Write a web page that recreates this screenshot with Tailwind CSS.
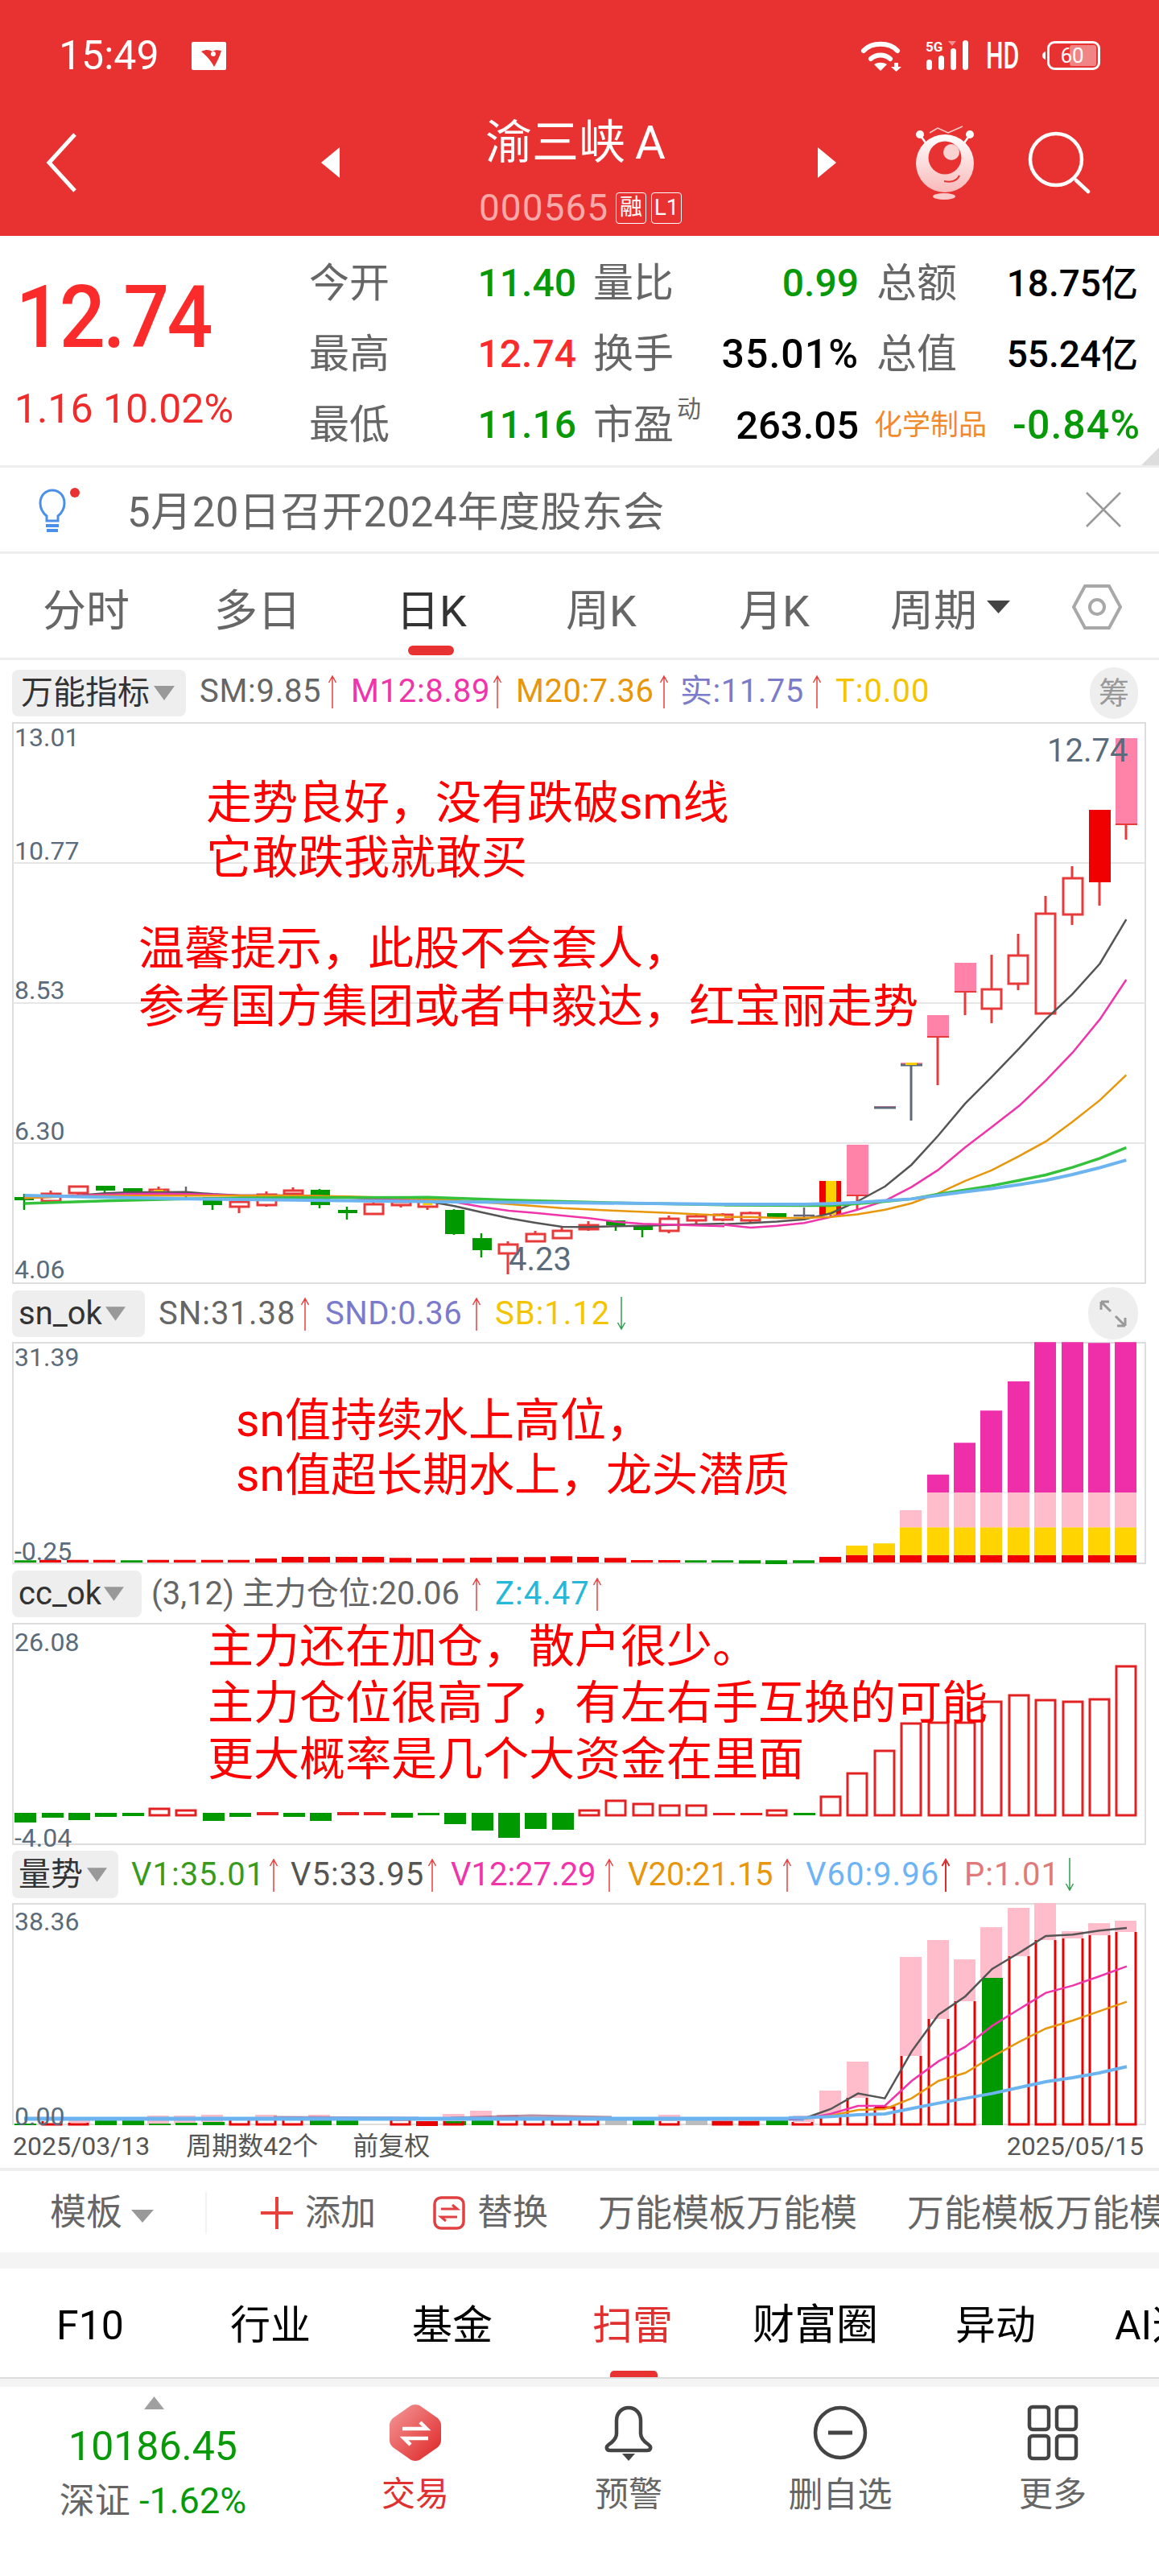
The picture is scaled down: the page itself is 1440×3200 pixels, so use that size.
<!doctype html>
<html lang="zh">
<head>
<meta charset="utf-8">
<script src="https://cdn.jsdelivr.net/npm/@tailwindcss/browser@4"></script>
</head>
<body class="bg-white font-['Roboto','Noto_Sans_CJK_SC',sans-serif]">
<div class="w-[1440px] h-[3200px] overflow-hidden relative bg-white">

<!-- header -->
<header class="h-[293px] bg-[#e83232] text-white relative">
  <div class="h-[132px] flex items-center pl-[73px] pr-[73px] pt-[6px]">
    <span class="text-[50px] leading-none">15:49</span>
    <svg class="ml-[40px] w-[43px] h-[35px]" viewBox="0 0 43 35"><path fill="#fff" d="M2 0h39a2 2 0 0 1 2 2v31a2 2 0 0 1-2 2H2a2 2 0 0 1-2-2V2a2 2 0 0 1 2-2z"/><path fill="#e83232" d="M12 12c6-3 10-2 14 0 3-2 6-2 11-1-2 7-5 13-9 20-4-8-10-14-16-19z"/><circle cx="27" cy="15" r="3" fill="#fff"/></svg>
    <div class="ml-auto flex items-center">
      <svg class="w-[52px] h-[40px]" viewBox="0 0 52 40"><g fill="none" stroke="#fff" stroke-width="6" stroke-linecap="round"><path d="M3 14C13 3 35 3 45 14"/><path d="M12 24c7-6 17-6 24 0"/></g><path fill="#fff" d="M16 31c5-3 11-3 16 0l-8 8zM41 29h5v5h4l-6.500 6-6.500-6h4z"/></svg>
      <svg class="ml-[28px] w-[54px] h-[38px]" viewBox="0 0 54 38"><text x="0" y="14" font-size="17" font-weight="700" fill="#fff">5G</text><path d="M28 1h10l-5 6z" fill="#fff" fill-opacity=".45"/><g fill="#fff"><rect x="1" y="24" width="7" height="13" rx="3.500"/><rect x="16" y="19" width="7" height="18" rx="3.500"/><rect x="31" y="10" width="7" height="27" rx="3.500"/><rect x="46" y="0" width="7" height="37" rx="3.500"/></g></svg>
      <span class="ml-[21px] w-[42px] text-[46px] leading-none font-medium scale-x-[.66] origin-left whitespace-nowrap">HD</span>
      <svg class="ml-[28px] w-[4px] h-[10px]" viewBox="0 0 4 10"><path d="M4 0v10C1 9 0 7 0 5s1-4 4-5z" fill="#fff"/></svg>
      <div class="ml-[2px] w-[66px] h-[36px] rounded-[9px] border-[3px] border-white flex items-center justify-center relative">
        <div class="absolute right-[2px] top-[2px] bottom-[2px] w-[33px] rounded-[3px] bg-white/40"></div>
        <span class="relative text-[26px] leading-none -ml-[4px]">60</span>
      </div>
    </div>
  </div>
  <!-- nav -->
  <svg class="absolute left-[55px] top-[163px] w-[44px] h-[78px]" viewBox="0 0 44 78"><path d="M38 4 6 39l32 35" fill="none" stroke="#fff" stroke-width="5"/></svg>
  <svg class="absolute left-[399px] top-[183px] w-[24px] h-[38px]" viewBox="0 0 24 38"><path d="M23 0v38L0 19z" fill="#fff"/></svg>
  <svg class="absolute left-[1015px] top-[183px] w-[24px] h-[38px]" viewBox="0 0 24 38"><path d="M1 0v38l23-19z" fill="#fff"/></svg>
  <div class="absolute left-[603px] top-[143px] flex items-center h-[68px] text-[58px] leading-none">渝三峡<span class="ml-[12px]">A</span></div>
  <div class="absolute left-[595px] top-[238px] flex items-center h-[40px]">
    <span class="text-[46px] leading-none text-[#f7a9a9] tracking-[1px]">000565</span>
    <span class="ml-[9px] w-[38px] h-[39px] border-[1.5px] border-white rounded-[4px] text-[28px] leading-none flex items-center justify-center">融</span>
    <span class="ml-[6px] w-[38px] h-[39px] border-[1.5px] border-white rounded-[4px] text-[28px] leading-none flex items-center justify-center">L1</span>
  </div>
  <svg class="absolute left-[1137px] top-[156px] w-[76px] h-[94px]" viewBox="0 0 76 94">
    <defs><linearGradient id="mg" x1="0" y1="0" x2="0" y2="1"><stop offset="0" stop-color="#ffffff"/><stop offset="1" stop-color="#f9b9b9"/></linearGradient></defs>
    <path d="M18 9l10-6 13 6 18-8" fill="none" stroke="#fbd0d0" stroke-width="1.500"/>
    <circle cx="6" cy="11" r="5" fill="#fff"/><circle cx="68" cy="11" r="5" fill="#fff"/>
    <path d="M7 13l8 11M67 13l-8 11" stroke="#fff" stroke-width="2.500"/>
    <circle cx="37" cy="47" r="36" fill="url(#mg)"/>
    <circle cx="37" cy="40" r="20.500" fill="#e83232"/><circle cx="45" cy="33" r="10" fill="#fbd2d2"/>
    <path d="M36 69c8 2 16 0 19-7" fill="none" stroke="#e83232" stroke-width="2"/>
    <ellipse cx="36" cy="88" rx="14" ry="4" fill="#f9caca"/>
  </svg>
  <svg class="absolute left-[1277px] top-[163px] w-[78px] h-[78px]" viewBox="0 0 78 78"><circle cx="35" cy="35" r="32" fill="none" stroke="#fff" stroke-width="4.500"/><path d="M60 61l15 14" stroke="#fff" stroke-width="4.500" stroke-linecap="round"/></svg>
</header>

<!-- quote -->
<section class="h-[288px] border-b-[3px] border-[#eeeeee] flex relative">
  <div class="w-[386px] shrink-0">
    <div class="pl-[21px] pt-[51px] text-[108px] leading-[100px] font-medium text-[#fb2b2b] tracking-[-3px] scale-x-[.93] origin-left">12.74</div>
    <div class="pl-[18px] pt-[37px] text-[50px] leading-[54px] text-[#ef2b2b] whitespace-nowrap">1.16 10.02%</div>
  </div>
  <div class="pt-[15px] -ml-[2px]">
    <div class="h-[88px] flex items-center">
      <span class="w-[100px] text-[50px] leading-none text-[#666]">今开</span>
      <span class="w-[232px] text-right text-[48px] font-medium text-[#089908] leading-none">11.40</span>
      <span class="ml-[21px] w-[100px] text-[50px] leading-none text-[#666]">量比</span>
      <span class="w-[230px] text-right text-[48px] font-medium text-[#089908] leading-none">0.99</span>
      <span class="ml-[22px] w-[100px] text-[50px] leading-none text-[#666]">总额</span>
      <span class="w-[225px] text-right text-[46px] text-black font-medium leading-none whitespace-nowrap">18.75亿</span>
    </div>
    <div class="h-[88px] flex items-center">
      <span class="w-[100px] text-[50px] leading-none text-[#666]">最高</span>
      <span class="w-[232px] text-right text-[48px] font-medium text-[#fb2b2b] leading-none">12.74</span>
      <span class="ml-[21px] w-[100px] text-[50px] leading-none text-[#666]">换手</span>
      <span class="w-[230px] text-right text-[50px] font-medium text-black leading-none tracking-[1px]">35.01%</span>
      <span class="ml-[22px] w-[100px] text-[50px] leading-none text-[#666]">总值</span>
      <span class="w-[225px] text-right text-[46px] text-black font-medium leading-none whitespace-nowrap">55.24亿</span>
    </div>
    <div class="h-[88px] flex items-center">
      <span class="w-[100px] text-[50px] leading-none text-[#666]">最低</span>
      <span class="w-[232px] text-right text-[48px] font-medium text-[#089908] leading-none">11.16</span>
      <span class="ml-[21px] w-[100px] text-[50px] leading-none text-[#666] relative">市盈<span class="absolute left-[104px] top-[-10px] text-[30px] leading-none">动</span></span>
      <span class="w-[230px] text-right text-[49px] font-medium text-black leading-none">263.05</span>
      <span class="ml-[19px] w-[142px] text-[35px] leading-none text-[#f08a2b] whitespace-nowrap">化学制品</span>
      <span class="ml-[30px] w-[159px] text-right text-[50px] font-medium text-[#089908] leading-none whitespace-nowrap tracking-[1px]">-0.84%</span>
    </div>
  </div>
  <svg class="absolute right-0 bottom-0 w-[22px] h-[22px]" viewBox="0 0 22 22"><path d="M22 0v22H0z" fill="#dddddd"/></svg>
</section>

<!-- notice -->
<section class="h-[107px] border-b-[3px] border-[#eeeeee] flex items-center pl-[44px] pr-[46px]">
  <svg class="w-[58px] h-[58px] shrink-0 mt-[2px]" viewBox="0 0 58 58"><path d="M14 36c-5-4-8-10-8-16C6 10 13 4 21 4s15 6 15 16c0 6-3 12-8 16v6H14z" fill="none" stroke="#4a90ea" stroke-width="3"/><path d="M13 48h16M14 54h14" stroke="#4a90ea" stroke-width="4"/><circle cx="49" cy="7" r="6" fill="#e83232"/></svg>
  <span class="ml-[56px] mt-[6px] text-[51px] leading-none text-[#666] whitespace-nowrap tracking-[.5px]">5月20日召开2024年度股东会</span>
  <svg class="ml-auto w-[46px] h-[46px]" viewBox="0 0 46 46"><path d="M2 2l42 42M44 2 2 44" stroke="#999" stroke-width="2.500"/></svg>
</section>

<!-- period tabs -->
<nav class="h-[132px] border-b-[3px] border-[#eeeeee] relative text-[#666] text-[54px] leading-none">
  <span class="absolute left-[53px] top-[45px]">分时</span>
  <span class="absolute left-[266px] top-[45px]">多日</span>
  <span class="absolute left-[492px] top-[45px] text-[#333]">日K</span>
  <span class="absolute left-[703px] top-[45px]">周K</span>
  <span class="absolute left-[918px] top-[45px]">月K</span>
  <span class="absolute left-[1106px] top-[45px]">周期</span>
  <svg class="absolute left-[1226px] top-[58px] w-[29px] h-[16px]" viewBox="0 0 29 16"><path d="M0 0h29L14.500 16z" fill="#444"/></svg>
  <svg class="absolute left-[1332px] top-[38px] w-[62px] h-[56px]" viewBox="0 0 62 56"><path d="M16 2h30l14 26-14 26H16L2 28z" fill="none" stroke="#a8a8a8" stroke-width="4"/><circle cx="31" cy="28" r="9" fill="none" stroke="#a8a8a8" stroke-width="4"/></svg>
  <span class="absolute left-[507px] top-[114px] w-[57px] h-[12px] rounded-[6px] bg-[#e83232]"></span>
</nav>

<!-- row 1 -->
<div class="h-[78px] relative flex items-center pl-[248px]">
  <div class="absolute left-[15px] top-[12px] w-[216px] h-[58px] rounded-[8px] bg-[#eeeeee] flex items-center pl-[11px]"><span class="text-[40px] leading-none text-[#333] whitespace-nowrap">万能指标</span><svg class="ml-[5px] w-[26px] h-[18px]" viewBox="0 0 26 18"><path d="M0 0h26L13 18z" fill="#999"/></svg></div>
  <div class="flex w-[188px] shrink-0 items-center"><span class="w-[153px] text-[40px] leading-none text-[#666] whitespace-nowrap tracking-[.7px]">SM:9.85</span><svg class="ml-[6px] w-[12px] h-[42px]" viewBox="0 0 12 42"><path d="M6 42V2M1.500 10 6 2l4.500 8" fill="none" stroke="#e84040" stroke-width="1.500"/></svg></div>
  <div class="flex w-[205px] shrink-0 items-center"><span class="w-[170px] text-[40px] leading-none text-[#f034aa] whitespace-nowrap tracking-[.7px]">M12:8.89</span><svg class="ml-[6px] w-[12px] h-[42px]" viewBox="0 0 12 42"><path d="M6 42V2M1.500 10 6 2l4.500 8" fill="none" stroke="#e84040" stroke-width="1.500"/></svg></div>
  <div class="flex w-[204px] shrink-0 items-center"><span class="w-[172px] text-[40px] leading-none text-[#e8960c] whitespace-nowrap tracking-[.5px]">M20:7.36</span><svg class="ml-[6px] w-[12px] h-[42px]" viewBox="0 0 12 42"><path d="M6 42V2M1.500 10 6 2l4.500 8" fill="none" stroke="#e84040" stroke-width="1.500"/></svg></div>
  <div class="flex w-[193px] shrink-0 items-center"><span class="w-[158px] text-[40px] leading-none text-[#7b7bcb] whitespace-nowrap tracking-[.5px]">实:11.75</span><svg class="ml-[6px] w-[12px] h-[42px]" viewBox="0 0 12 42"><path d="M6 42V2M1.500 10 6 2l4.500 8" fill="none" stroke="#e84040" stroke-width="1.500"/></svg></div>
  <span class="text-[40px] leading-none text-[#f5c400] whitespace-nowrap tracking-[1px]">T:0.00</span>
  <div class="absolute left-[1354px] top-[9px] w-[60px] h-[64px] rounded-full bg-[#eeeeee] flex items-center justify-center text-[38px] leading-none text-[#999]">筹</div>
</div>

<!-- K chart -->
<div class="relative h-[697px]">
<svg class="block w-[1440px] h-[697px] overflow-visible" viewBox="0 898 1440 697">
  <rect x="16" y="898" width="1407" height="696" fill="none" stroke="#dddddd" stroke-width="2"/>
  <path d="M16 1072H1423M16 1246H1423M16 1420H1423" stroke="#e6e6e6" stroke-width="2"/>
  <!-- green -->
  <g stroke="#009900" stroke-width="2.500">
    <path d="M30 1483V1503M130 1479V1483M264 1497V1503M397 1477V1501M431 1499V1515M564 1502V1534M598 1532V1562M765 1522V1529M798 1528V1537"/>
  </g>
  <g fill="#009900">
    <rect x="18" y="1487" width="24" height="4"/><rect x="119" y="1473" width="24" height="6"/><rect x="153" y="1476" width="24" height="5"/><rect x="252" y="1487" width="24" height="10"/><rect x="386" y="1478" width="24" height="19"/><rect x="420" y="1503" width="24" height="4"/><rect x="553" y="1503" width="24" height="30"/><rect x="587" y="1538" width="24" height="15"/><rect x="753" y="1516" width="24" height="6"/><rect x="787" y="1522" width="24" height="6"/><rect x="953" y="1507" width="24" height="6"/>
  </g>
  <!-- gray doji -->
  <path d="M231 1474V1490M219 1483H243M999 1500V1516M986 1510H1012" stroke="#667" stroke-width="2.500"/>
  <!-- hollow -->
  <g stroke="#e83a3a" stroke-width="3" fill="#fff">
    <path d="M63 1479V1494M97 1473V1485M197 1474V1485M297 1492V1507M331 1480V1499M364 1475V1491M464 1493V1509M498 1490V1500M531 1487V1503M631 1542V1583M665 1529V1543M698 1525V1539M731 1517V1529M831 1510V1532M865 1508V1520M898 1507V1517M932 1505V1518" fill="none"/>
    <rect x="52" y="1483" width="23" height="9"/><rect x="86" y="1474" width="23" height="8"/><rect x="186" y="1478" width="23" height="5"/><rect x="286" y="1493" width="23" height="6"/><rect x="320" y="1484" width="23" height="13"/><rect x="353" y="1479" width="23" height="4"/><rect x="453" y="1496" width="23" height="12"/><rect x="487" y="1493" width="23" height="4"/><rect x="520" y="1488" width="23" height="11"/><rect x="620" y="1546" width="23" height="11"/><rect x="654" y="1533" width="23" height="9"/><rect x="687" y="1529" width="23" height="9"/><rect x="720" y="1522" width="23" height="5" fill="#d05050"/><rect x="820" y="1514" width="23" height="15"/><rect x="854" y="1511" width="23" height="5"/><rect x="887" y="1509" width="23" height="6"/><rect x="921" y="1507" width="23" height="9"/>
  </g>
  <g stroke="#e83a3a" stroke-width="3" fill="#fff">
    <path d="M1299 1113V1135M1332 1076V1091M1332 1136V1149M1265 1160V1187M1265 1222V1230M1232 1186V1229M1232 1253V1271" fill="none"/>
    <rect x="1220" y="1229" width="24" height="24"/><rect x="1253" y="1187" width="24" height="35"/><rect x="1287" y="1135" width="24" height="124"/><rect x="1321" y="1091" width="24" height="45"/>
  </g>
  <rect x="191" y="1478" width="12" height="5" fill="#ffd000"/><rect x="525" y="1488" width="12" height="9" fill="#ffd000"/>
  <!-- right pink/red -->
  <path d="M1399 1024V1043M1366 1096V1125M1199 1232V1261M1165 1288V1348M1065 1485V1503" stroke="#e83a3a" stroke-width="3" fill="none"/>
  <g fill="#ff82a8">
    <rect x="1386" y="917" width="27" height="107"/><rect x="1186" y="1196" width="27" height="36"/><rect x="1152" y="1261" width="27" height="27"/><rect x="1052" y="1422" width="27" height="63"/>
    <rect x="1086" y="1374" width="27" height="2"/><rect x="1119" y="1320" width="27" height="3"/>
  </g>
  <path d="M1386 1024H1413M1186 1232H1213M1152 1288H1179M1052 1485H1079" stroke="#e83a3a" stroke-width="2"/>
  <rect x="1353" y="1006" width="27" height="90" fill="#f00000"/>
  <rect x="1018" y="1467" width="27" height="42" fill="#f00000"/><rect x="1026" y="1467" width="13" height="42" fill="#ffd000"/><path d="M1032 1509V1513" stroke="#e83a3a" stroke-width="3"/>
  <path d="M1086 1376H1113M1119 1323H1146M1132 1323V1392" stroke="#5c6b78" stroke-width="3" fill="none"/>
  <rect x="1125" y="1320" width="14" height="3" fill="#ffd000"/>
  <!-- MAs left -->
  <g transform="translate(0 1380) scale(.574 .3333)" fill="none">
    <polyline vector-effect="non-scaling-stroke" stroke="#555" stroke-width="2.500" points="53,322 113,320 170,315 228,307 287,303 345,303 403,302 461,310 520,315 578,315 636,315 694,318 752,322 810,328 868,333 926,337 984,355 1043,378 1101,400 1159,417 1217,432 1275,433 1333,430 1391,428 1449,425 1507,423 1568,420"/>
    <polyline vector-effect="non-scaling-stroke" stroke="#f034aa" stroke-width="2.500" points="53,325 113,320 170,315 228,312 287,310 345,308 403,310 461,312 520,315 578,315 636,316 694,318 752,323 810,328 868,330 926,332 984,340 1043,358 1101,372 1159,380 1217,390 1275,400 1333,413 1391,421 1449,424 1507,427 1568,430"/>
    <polyline vector-effect="non-scaling-stroke" stroke="#e8960c" stroke-width="2.500" points="53,325 170,318 287,316 403,316 520,316 636,316 752,319 868,325 984,333 1101,347 1217,362 1333,372 1449,380 1568,390"/>
    <polyline vector-effect="non-scaling-stroke" stroke="#34c13c" stroke-width="3.500" points="53,345 228,335 403,328 520,325 694,323 926,322 1101,332 1333,343 1568,350"/>
    <polyline vector-effect="non-scaling-stroke" stroke="#6cb4f0" stroke-width="4" points="53,315 228,322 403,328 636,332 926,338 1217,342 1568,348"/>
  </g>
  <g transform="translate(900 880) scale(.34435 .44643)" fill="none">
    <polyline vector-effect="non-scaling-stroke" stroke="#555" stroke-width="2.500" points="1450,587 1355,710 1256,795 1160,865 1065,945 965,1025 868,1100 770,1190 675,1270 580,1330 480,1372 384,1405 288,1422 190,1428 95,1432 0,1435"/>
    <polyline vector-effect="non-scaling-stroke" stroke="#f034aa" stroke-width="2.500" points="1450,755 1355,865 1256,958 1160,1035 1065,1105 965,1165 868,1222 770,1285 675,1332 580,1370 480,1395 384,1415 288,1432 190,1440 95,1445 0,1437"/>
    <polyline vector-effect="non-scaling-stroke" stroke="#e8960c" stroke-width="2.500" points="1450,1020 1355,1090 1256,1150 1160,1205 1065,1245 965,1285 868,1315 770,1350 675,1377 580,1395 480,1408 384,1415 288,1418 190,1418 95,1415 0,1415"/>
    <polyline vector-effect="non-scaling-stroke" stroke="#34c13c" stroke-width="3.500" points="1450,1222 1355,1252 1256,1277 1160,1298 1065,1313 965,1328 868,1340 770,1352 675,1365 580,1372 480,1378 384,1383 288,1383 0,1382"/>
    <polyline vector-effect="non-scaling-stroke" stroke="#6cb4f0" stroke-width="4" points="1450,1257 1355,1278 1256,1297 1160,1313 1065,1325 965,1336 868,1345 770,1355 675,1365 580,1370 480,1375 384,1378 288,1380 0,1380"/>
  </g>
</svg>
<span class="absolute left-[18px] top-[-1px] text-[32px] leading-[38px] text-[#5a6b7b]">13.01</span>
<span class="absolute left-[18px] top-[140px] text-[32px] leading-[38px] text-[#5a6b7b]">10.77</span>
<span class="absolute left-[18px] top-[313px] text-[32px] leading-[38px] text-[#5a6b7b]">8.53</span>
<span class="absolute left-[18px] top-[488px] text-[32px] leading-[38px] text-[#5a6b7b]">6.30</span>
<span class="absolute left-[18px] top-[660px] text-[32px] leading-[38px] text-[#5a6b7b]">4.06</span>
<span class="absolute left-[1301px] top-[12px] text-[40px] leading-[46px] text-[#5a6b7b]">12.74</span>
<span class="absolute left-[632px] top-[644px] text-[40px] leading-[46px] text-[#5a6b7b]">4.23</span>
<p class="absolute left-[256px] top-[66px] text-[57px] leading-[68px] text-[#f00] whitespace-nowrap">走势良好，没有跌破sm线<br>它敢跌我就敢买</p>
<p class="absolute left-[172px] top-[245px] text-[57px] leading-[72px] text-[#f00] whitespace-nowrap">温馨提示，此股不会套人，<br>参考国方集团或者中毅达，红宝丽走势</p>
</div>

<!-- row 2 -->
<div class="h-[73px] relative flex items-center pl-[197px]">
  <div class="absolute left-[15px] top-[8px] w-[165px] h-[58px] rounded-[8px] bg-[#eeeeee] flex items-center pl-[8px]"><span class="text-[40px] leading-none text-[#333] whitespace-nowrap">sn_ok</span><svg class="ml-[4px] w-[25px] h-[18px]" viewBox="0 0 26 18"><path d="M0 0h26L13 18z" fill="#999"/></svg></div>
  <div class="flex w-[207px] shrink-0 items-center"><span class="w-[170px] text-[40px] leading-none text-[#666] whitespace-nowrap tracking-[1px]">SN:31.38</span><svg class="ml-[6px] w-[12px] h-[42px]" viewBox="0 0 12 42"><path d="M6 42V2M1.500 10 6 2l4.500 8" fill="none" stroke="#e84040" stroke-width="1.500"/></svg></div>
  <div class="flex w-[211px] shrink-0 items-center"><span class="w-[176px] text-[40px] leading-none text-[#7b7bcb] whitespace-nowrap tracking-[.5px]">SND:0.36</span><svg class="ml-[6px] w-[12px] h-[42px]" viewBox="0 0 12 42"><path d="M6 42V2M1.500 10 6 2l4.500 8" fill="none" stroke="#e84040" stroke-width="1.500"/></svg></div>
  <div class="flex shrink-0 items-center"><span class="w-[145px] text-[40px] leading-none text-[#f5c400] whitespace-nowrap tracking-[1px]">SB:1.12</span><svg class="ml-[6px] w-[12px] h-[42px]" viewBox="0 0 12 42"><path d="M6 0v40M1.500 32 6 40l4.500-8" fill="none" stroke="#2f9e4f" stroke-width="1.500"/></svg></div>
  <div class="absolute left-[1352px] top-[4px] w-[62px] h-[65px] rounded-full bg-[#eeeeee] flex items-center justify-center"><svg class="w-[34px] h-[34px]" viewBox="0 0 34 34"><path d="M2 2l12 12M2 2v10M2 2h10M32 32 20 20M32 32V22M32 32H22" fill="none" stroke="#999" stroke-width="3"/></svg></div>
</div>

<!-- sn chart -->
<div class="relative h-[275px]">
<svg class="block w-[1440px] h-[275px] overflow-visible" viewBox="0 1668 1440 275">
  <rect x="16" y="1668" width="1407" height="274" fill="none" stroke="#dddddd" stroke-width="2"/>
  <g transform="translate(0 1580) scale(1 .3333)">
    <g fill="#009900"><path d="M18 1075h27v8H18zM150 1075h27v8h-27zM851 1075h27v8h-27zM884 1075h27v8h-27zM918 1075h27v12h-27zM951 1075h27v14h-27zM985 1075h27v10h-27z"/></g>
    <g fill="#f00000"><path d="M49 1073h27v10H49zM83 1073h27v10H83zM116 1073h27v10h-27zM183 1073h27v10h-27zM216 1073h27v10h-27zM250 1073h27v10h-27zM283 1073h27v10h-27zM317 1068h27v15h-27zM350 1062h27v21h-27zM383 1062h27v21h-27zM417 1062h27v21h-27zM450 1062h27v21h-27zM484 1066h27v17h-27zM517 1068h27v15h-27zM550 1067h27v16h-27zM584 1065h27v18h-27zM617 1063h27v20h-27zM651 1063h27v20h-27zM684 1060h27v23h-27zM717 1062h27v21h-27zM751 1066h27v17h-27zM784 1074h27v9h-27zM818 1074h27v9h-27zM1018 1062h27v21h-27zM1051 1055h27v28h-27zM1085 1055h27v28h-27zM1118 1055h27v28h-27zM1152 1055h27v28h-27zM1185 1055h27v28h-27zM1218 1055h27v28h-27zM1252 1055h27v28h-27zM1285 1055h27v28h-27zM1319 1055h27v28h-27zM1352 1055h27v28h-27zM1385 1055h27v28h-27z"/></g>
    <g fill="#ffd400"><path d="M1051 1020h27v35h-27zM1085 1012h27v43h-27zM1118 952h27v103h-27zM1152 952h27v103h-27zM1185 952h27v103h-27zM1218 952h27v103h-27zM1252 952h27v103h-27zM1285 952h27v103h-27zM1319 952h27v103h-27zM1352 952h27v103h-27zM1385 952h27v103h-27z"/></g>
    <g fill="#ffbccb"><path d="M1118 888h27v64h-27zM1152 822h27v130h-27zM1185 822h27v130h-27zM1218 822h27v130h-27zM1252 822h27v130h-27zM1285 822h27v130h-27zM1319 822h27v130h-27zM1352 822h27v130h-27zM1385 822h27v130h-27z"/></g>
    <g fill="#ee2fa9"><path d="M1152 755h27v67h-27zM1185 637h27v185h-27zM1218 517h27v305h-27zM1252 408h27v414h-27zM1285 262h27v560h-27zM1319 262h27v560h-27zM1352 265h27v557h-27zM1385 262h27v560h-27z"/></g>
  </g>
</svg>
<span class="absolute left-[18px] top-[-1px] text-[32px] leading-[38px] text-[#5a6b7b]">31.39</span>
<span class="absolute left-[18px] top-[240px] text-[32px] leading-[38px] text-[#5a6b7b]">-0.25</span>
<p class="absolute left-[293px] top-[63px] text-[57px] leading-[68px] text-[#f00] whitespace-nowrap">sn值持续水上高位，<br>sn值超长期水上，龙头潜质</p>
</div>

<!-- row 3 -->
<div class="h-[74px] relative flex items-center pl-[188px]">
  <div class="absolute left-[15px] top-[8px] w-[161px] h-[58px] rounded-[8px] bg-[#eeeeee] flex items-center pl-[8px]"><span class="text-[40px] leading-none text-[#333] whitespace-nowrap">cc_ok</span><svg class="ml-[3px] w-[25px] h-[18px]" viewBox="0 0 26 18"><path d="M0 0h26L13 18z" fill="#999"/></svg></div>
  <div class="flex w-[427px] shrink-0 items-center"><span class="w-[395px] text-[40px] leading-none text-[#666] whitespace-nowrap">(3,12) 主力仓位:20.06</span><svg class="ml-[3px] w-[12px] h-[42px]" viewBox="0 0 12 42"><path d="M6 42V2M1.500 10 6 2l4.500 8" fill="none" stroke="#e84040" stroke-width="1.500"/></svg></div>
  <div class="flex shrink-0 items-center"><span class="w-[118px] text-[40px] leading-none text-[#25b8d8] whitespace-nowrap tracking-[1px]">Z:4.47</span><svg class="ml-[3px] w-[12px] h-[42px]" viewBox="0 0 12 42"><path d="M6 42V2M1.500 10 6 2l4.500 8" fill="none" stroke="#e84040" stroke-width="1.500"/></svg></div>
</div>

<!-- cc chart -->
<div class="relative h-[275px]">
<svg class="block w-[1440px] h-[275px] overflow-visible" viewBox="0 2017 1440 275">
  <rect x="16" y="2017" width="1407" height="274" fill="none" stroke="#dddddd" stroke-width="2"/>
  <g fill="#009900"><path d="M18 2252h27v12H18zM52 2252h27v6H52zM85 2252h27v9H85zM118 2252h27v5h-27zM152 2252h27v4h-27zM252 2252h27v10h-27zM285 2252h27v5h-27zM352 2252h27v5h-27zM385 2252h27v10h-27zM486 2252h27v6h-27zM519 2252h27v3h-27zM552 2252h27v14h-27zM586 2252h27v22h-27zM619 2252h27v31h-27zM652 2252h27v20h-27zM686 2252h27v21h-27zM986 2252h27v3h-27z"/></g>
  <g fill="#e82020"><path d="M319 2251h27v4h-27zM419 2251h27v4h-27zM452 2251h27v4h-27zM886 2252h27v3h-27zM920 2252h27v3h-27z"/></g>
  <g fill="none" stroke="#e22222" stroke-width="3">
    <rect x="186" y="2247" width="24" height="8"/><rect x="219" y="2249" width="24" height="6"/><rect x="720" y="2249" width="24" height="6"/><rect x="753" y="2237" width="24" height="18"/><rect x="787" y="2241" width="24" height="14"/><rect x="820" y="2243" width="24" height="12"/><rect x="853" y="2243" width="24" height="12"/><rect x="953" y="2249" width="24" height="6"/><rect x="1020" y="2232" width="24" height="23"/><rect x="1053" y="2203" width="24" height="52"/><rect x="1087" y="2175" width="24" height="80"/><rect x="1120" y="2141" width="24" height="114"/><rect x="1154" y="2140" width="24" height="115"/><rect x="1187" y="2140" width="24" height="115"/><rect x="1220" y="2114" width="24" height="141"/><rect x="1254" y="2106" width="24" height="149"/><rect x="1287" y="2112" width="24" height="143"/><rect x="1321" y="2114" width="24" height="141"/><rect x="1354" y="2111" width="24" height="144"/><rect x="1387" y="2070" width="24" height="185"/>
  </g>
</svg>
<span class="absolute left-[18px] top-[4px] text-[32px] leading-[38px] text-[#5a6b7b]">26.08</span>
<span class="absolute left-[18px] top-[247px] text-[32px] leading-[38px] text-[#5a6b7b]">-4.04</span>
<p class="absolute left-[258px] top-[-6px] text-[57px] leading-[70px] text-[#f00] whitespace-nowrap">主力还在加仓，散户很少。<br>主力仓位很高了，有左右手互换的可能<br>更大概率是几个大资金在里面</p>
</div>

<!-- row 4 -->
<div class="h-[73px] relative flex items-center pl-[163px]">
  <div class="absolute left-[15px] top-[7px] w-[132px] h-[59px] rounded-[8px] bg-[#eeeeee] flex items-center pl-[8px]"><span class="text-[40px] leading-none text-[#333] whitespace-nowrap">量势</span><svg class="ml-[5px] w-[25px] h-[18px]" viewBox="0 0 26 18"><path d="M0 0h26L13 18z" fill="#999"/></svg></div>
  <div class="flex w-[198px] shrink-0 items-center"><span class="w-[163px] text-[40px] leading-none text-[#3a9a1e] whitespace-nowrap tracking-[1px]">V1:35.01</span><svg class="ml-[8px] w-[12px] h-[42px]" viewBox="0 0 12 42"><path d="M6 42V2M1.500 10 6 2l4.500 8" fill="none" stroke="#e84040" stroke-width="1.500"/></svg></div>
  <div class="flex w-[199px] shrink-0 items-center"><span class="w-[165px] text-[40px] leading-none text-[#555] whitespace-nowrap tracking-[1px]">V5:33.95</span><svg class="ml-[5px] w-[12px] h-[42px]" viewBox="0 0 12 42"><path d="M6 42V2M1.500 10 6 2l4.500 8" fill="none" stroke="#e84040" stroke-width="1.500"/></svg></div>
  <div class="flex w-[220px] shrink-0 items-center"><span class="w-[184px] text-[40px] leading-none text-[#f034aa] whitespace-nowrap">V12:27.29</span><svg class="ml-[7px] w-[12px] h-[42px]" viewBox="0 0 12 42"><path d="M6 42V2M1.500 10 6 2l4.500 8" fill="none" stroke="#e84040" stroke-width="1.500"/></svg></div>
  <div class="flex w-[221px] shrink-0 items-center"><span class="w-[184px] text-[40px] leading-none text-[#e8960c] whitespace-nowrap">V20:21.15</span><svg class="ml-[8px] w-[12px] h-[42px]" viewBox="0 0 12 42"><path d="M6 42V2M1.500 10 6 2l4.500 8" fill="none" stroke="#e84040" stroke-width="1.500"/></svg></div>
  <div class="flex w-[197px] shrink-0 items-center"><span class="w-[161px] text-[40px] leading-none text-[#6cb4f5] whitespace-nowrap tracking-[1px]">V60:9.96</span><svg class="ml-[7px] w-[12px] h-[42px]" viewBox="0 0 12 42"><path d="M6 42V2M1.500 10 6 2l4.500 8" fill="none" stroke="#d83030" stroke-width="2"/></svg></div>
  <div class="flex shrink-0 items-center"><span class="w-[117px] text-[40px] leading-none text-[#e07a7a] whitespace-nowrap tracking-[1px]">P:1.01</span><svg class="ml-[8px] w-[12px] h-[42px]" viewBox="0 0 12 42"><path d="M6 0v40M1.500 32 6 40l4.500-8" fill="none" stroke="#2f9e4f" stroke-width="1.500"/></svg></div>
</div>

<!-- vol chart -->
<div class="relative h-[275px]">
<svg class="block w-[1440px] h-[275px] overflow-visible" viewBox="0 2365 1440 275">
  <rect x="16" y="2365" width="1407" height="274" fill="none" stroke="#dddddd" stroke-width="2"/>
  <!-- pink caps -->
  <g fill="#ffbccb"><path d="M85 2633h27v4H85zM183 2628h27v10h-27zM216 2628h27v10h-27zM250 2627h27v9h-27zM317 2627h27v6h-27zM350 2629h27v4h-27zM383 2627h27v6h-27zM517 2630h27v3h-27zM550 2626h27v9h-27zM584 2622h27v11h-27zM617 2627h27v6h-27zM818 2627h27v8h-27zM985 2628h27v8h-27zM1018 2597h27v30h-27zM1052 2561h27v45h-27zM1118 2431h27v123h-27zM1152 2410h27v98h-27zM1185 2434h27v52h-27zM1218 2394h27v63h-27zM1252 2370h27v60h-27zM1285 2364h27v46h-27zM1319 2399h27v9h-27zM1352 2389h27v15h-27zM1385 2386h27v14h-27z"/></g>
  <g fill="#009900"><path d="M18 2638h27v2H18zM118 2633h27v7h-27zM152 2633h27v7h-27zM185 2638h27v2h-27zM218 2637h27v3h-27zM252 2636h27v4h-27zM385 2633h27v7h-27zM418 2633h27v7h-27zM552 2635h27v5h-27zM586 2633h27v7h-27zM786 2632h27v8h-27zM952 2633h27v7h-27zM1220 2457h26v183h-26z"/></g>
  <g fill="#bdbdbd"><path d="M752 2632h27v8h-27zM852 2632h27v8h-27z"/></g>
  <g fill="none" stroke="#e60000" stroke-width="3">
    <path d="M53 2635v4h23v-4M86 2637v2h23v-2M286 2633v6h23v-6M319 2633v6h23v-6M352 2633v6h23v-6"/>
    <rect x="486" y="2633" width="23" height="6"/><rect x="519" y="2637" width="23" height="2" stroke-width="4"/>
    <path d="M552 2635v4h23v-4M619 2633v6h23v-6M652 2633v6h23v-6M686 2633v6h23v-6M720 2632v7h23v-7M820 2635v4h23v-4"/>
    <rect x="886" y="2636" width="23" height="3"/><rect x="919" y="2636" width="23" height="3"/>
    <path d="M985 2636v3h24v-3M1020 2627v12h24v-12M1053 2606v33h24v-33M1087 2618v21h24v-21H1087M1120 2554v85h24v-85M1154 2508v131h24v-131M1187 2486v153h24v-153M1254 2430v209h24v-209M1287 2410v229h24v-229M1321 2408v231h24v-231M1354 2404v235h24v-235M1387 2400v239h24v-239"/>
  </g>
  <path d="M340 2630L520 2631M560 2631L660 2628L760 2630" fill="none" stroke="#884466" stroke-width="3" opacity=".6"/>
  <path d="M30 2632H999" fill="none" stroke="#6cb4f0" stroke-width="5"/>
  <g transform="translate(980 2320) scale(.3333)" fill="none">
    <polyline vector-effect="non-scaling-stroke" stroke="#555" stroke-width="2.500" points="1260,225 1158,235 1058,250 958,255 858,318 758,378 658,480 558,548 458,685 358,860 258,842 156,900 57,935 0,937"/>
    <polyline vector-effect="non-scaling-stroke" stroke="#f034aa" stroke-width="2.500" points="1260,368 1158,405 1058,440 958,467 858,528 758,590 658,668 558,722 458,795 358,888 258,888 156,918 57,935 0,937"/>
    <polyline vector-effect="non-scaling-stroke" stroke="#e8960c" stroke-width="2.500" points="1260,500 1158,535 1058,570 958,600 858,650 758,705 658,765 558,795 458,860 358,900 258,903 156,925 57,935"/>
    <polyline vector-effect="non-scaling-stroke" stroke="#6cb4f0" stroke-width="4" points="1260,742 1158,765 1058,783 958,798 858,820 758,842 658,860 558,878 458,898 358,918 258,921 156,928 57,932 0,932"/>
  </g>
</svg>
<span class="absolute left-[18px] top-[3px] text-[32px] leading-[38px] text-[#5a6b7b]">38.36</span>
<span class="absolute left-[18px] top-[245px] text-[32px] leading-[38px] text-[#5a6b7b]">0.00</span>
</div>

<!-- date row -->
<div class="h-[57px] flex items-center pl-[16px] pr-[19px] border-b-[4px] border-[#eeeeee] text-[32px] leading-none text-[#555] pb-[2px]">
  <span>2025/03/13</span><span class="ml-[45px]">周期数42个</span><span class="ml-[43px]">前复权</span><span class="ml-auto">2025/05/15</span>
</div>

<!-- toolbar -->
<div class="h-[101px] flex items-center overflow-hidden whitespace-nowrap text-[#666] relative pt-[2px]">
  <span class="ml-[62px] text-[45px] leading-none">模板</span>
  <svg class="ml-[11px] mt-[8px] w-[28px] h-[16px] shrink-0" viewBox="0 0 28 16"><path d="M0 0h28L14 16z" fill="#999"/></svg>
  <span class="ml-[64px] h-[52px] w-[2px] bg-[#f2f2f2] shrink-0"></span>
  <svg class="ml-[67px] w-[40px] h-[40px] shrink-0" viewBox="0 0 40 40"><path d="M20 0v40M0 20h40" stroke="#e8403c" stroke-width="4"/></svg>
  <span class="ml-[15px] text-[44px] leading-none">添加</span>
  <svg class="ml-[71px] w-[40px] h-[42px] shrink-0" viewBox="0 0 40 42"><rect x="2" y="2" width="36" height="38" rx="8" fill="none" stroke="#e04040" stroke-width="3.500"/><path d="M10 16h20l-6-5M30 26H10l6 5" fill="none" stroke="#e04040" stroke-width="3"/></svg>
  <span class="ml-[15px] text-[44px] leading-none">替换</span>
  <span class="ml-[62px] text-[46px] leading-none">万能模板万能模</span>
  <span class="ml-[62px] text-[46px] leading-none">万能模板万能模</span>
</div>
<div class="h-[20px] bg-[#f4f4f4]"></div>

<!-- bottom tabs -->
<nav class="h-[137px] relative border-b-[2px] border-[#dddddd] text-[50px] leading-none text-black whitespace-nowrap overflow-hidden">
  <span class="absolute left-[70px] top-[46px]">F10</span>
  <span class="absolute left-[286px] top-[46px]">行业</span>
  <span class="absolute left-[512px] top-[46px]">基金</span>
  <span class="absolute left-[736px] top-[46px] text-[#e03030]">扫雷</span>
  <span class="absolute left-[935px] top-[45px] text-[52px]">财富圈</span>
  <span class="absolute left-[1187px] top-[46px]">异动</span>
  <span class="absolute left-[1385px] top-[46px]">AI选</span>
  <span class="absolute left-[758px] bottom-[-1px] w-[59px] h-[9px] rounded-t-[5px] bg-[#e83232]"></span>
</nav>
<div class="h-[10px] bg-[#f4f4f4]"></div>

<!-- bottom bar -->
<footer class="h-[235px] relative">
  <svg class="absolute left-[179px] top-[12px] w-[25px] h-[16px]" viewBox="0 0 25 16"><path d="M12.500 0 25 16H0z" fill="#a0a0a0"/></svg>
  <div class="absolute left-0 top-[46px] w-[380px] text-center text-[50px] leading-[56px] text-[#089908]">10186.45</div>
  <div class="absolute left-0 top-[114px] w-[380px] text-center text-[45px] leading-[56px] text-[#089908] whitespace-nowrap"><span class="text-[#666] text-[44px]">深证</span> -1.62%</div>

  <div class="absolute left-[414px] top-[22px] w-[204px] flex flex-col items-center">
    <svg class="w-[64px] h-[70px]" viewBox="0 0 64 70"><defs><linearGradient id="tg" x1="0" y1="0" x2="1" y2="1"><stop offset="0" stop-color="#f59a9a"/><stop offset="1" stop-color="#de2323"/></linearGradient></defs><path d="M32 0c3 0 6 1 8 3l20 14c2 2 4 5 4 8v20c0 3-2 6-4 8L40 67c-2 2-5 3-8 3s-6-1-8-3L4 53c-2-2-4-5-4-8V25c0-3 2-6 4-8L24 3c2-2 5-3 8-3z" fill="url(#tg)"/><path d="M16 30h30l-8-8M48 42H18l8 8" fill="none" stroke="#fff" stroke-width="4.500"/></svg>
    <span class="mt-[14px] text-[42px] leading-[56px] text-[#e03030]">交易</span>
  </div>
  <div class="absolute left-[679px] top-[22px] w-[204px] flex flex-col items-center">
    <svg class="w-[64px] h-[70px]" viewBox="0 0 64 70"><path d="M32 4c-9 0-15 7-15 16v16c0 6-4 10-10 14-4 3-2 7 2 7h46c4 0 6-4 2-7-6-4-10-8-10-14V20c0-9-6-16-15-16z" fill="none" stroke="#444" stroke-width="4.500"/><path d="M24 61h16l-8 9z" fill="#444"/></svg>
    <span class="mt-[14px] text-[42px] leading-[56px] text-[#666]">预警</span>
  </div>
  <div class="absolute left-[942px] top-[22px] w-[204px] flex flex-col items-center">
    <svg class="w-[68px] h-[70px]" viewBox="0 0 68 70"><circle cx="34" cy="35" r="31" fill="none" stroke="#444" stroke-width="4.500"/><path d="M19 35h30" stroke="#444" stroke-width="5"/></svg>
    <span class="mt-[14px] text-[43px] leading-[56px] text-[#666]">删自选</span>
  </div>
  <div class="absolute left-[1206px] top-[22px] w-[204px] flex flex-col items-center">
    <svg class="w-[64px] h-[70px]" viewBox="0 0 64 70"><g fill="none" stroke="#444" stroke-width="4.500"><rect x="3" y="3" width="24" height="28" rx="4"/><rect x="37" y="3" width="24" height="28" rx="4"/><rect x="3" y="39" width="24" height="28" rx="4"/><rect x="37" y="39" width="24" height="28" rx="4"/></g></svg>
    <span class="mt-[14px] text-[42px] leading-[56px] text-[#666]">更多</span>
  </div>
</footer>
</div>
</body>
</html>
